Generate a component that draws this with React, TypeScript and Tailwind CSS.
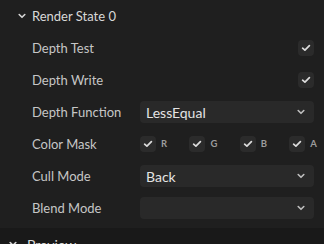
import React from "react";

const Chevron = ({ className = "" }: { className?: string }) => (
  <svg width="8" height="6" viewBox="0 0 8 6" className={className} fill="none">
    <path d="M1.2 1.5 L4 4.3 L6.8 1.5" stroke="currentColor" strokeWidth="1.6" strokeLinecap="round" strokeLinejoin="round" />
  </svg>
);

const Check = () => (
  <div className="w-4 h-4 rounded-[4px] bg-[#2b2b2b] flex items-center justify-center text-[#dcdcdc] shrink-0">
    <svg width="10" height="8" viewBox="0 0 10 8" fill="none">
      <path d="M1.6 4.2 L3.9 6.2 L8.4 1.7" stroke="currentColor" strokeWidth="1.7" strokeLinecap="round" strokeLinejoin="round" />
    </svg>
  </div>
);

const Select = ({ value }: { value?: string }) => (
  <div className="w-[174px] h-[22px] rounded-[4px] bg-[#292929] flex items-center justify-between pl-[6px] pr-[9px] text-[14px] text-[#e4e4e4]">
    <span>{value ?? ""}</span>
    <Chevron className="text-[#c0c0c0]" />
  </div>
);

const Row = ({ label, children }: { label: string; children?: React.ReactNode }) => (
  <div className="h-8 flex items-center">
    <div className="w-[140px] pl-8 pt-px text-[13px] text-[#c6c6c6] shrink-0">{label}</div>
    <div className="flex-1 flex items-center">{children}</div>
  </div>
);

export default function App() {
  return (
    <div className="w-[324px] h-[244px] overflow-hidden bg-[#1f1f1f]" style={{ fontFamily: "Lato, Inter, sans-serif" }}>
      <div className="h-8 flex items-center pl-[18px] text-[13px] text-[#d8d8d8]">
        <Chevron className="text-[#d6d6d6] mr-[6px]" />
        <span className="pt-px">Render State 0</span>
      </div>
      <Row label="Depth Test">
        <div className="ml-auto mr-[10px]"><Check /></div>
      </Row>
      <Row label="Depth Write">
        <div className="ml-auto mr-[10px]"><Check /></div>
      </Row>
      <Row label="Depth Function">
        <Select value="LessEqual" />
      </Row>
      <Row label="Color Mask">
        <div className="w-[177px] flex justify-between">
          {["R", "G", "B", "A"].map((c) => (
            <div key={c} className="flex items-center gap-[5px]">
              <Check />
              <span className="text-[9.5px] font-bold text-[#9c9c9c]">{c}</span>
            </div>
          ))}
        </div>
      </Row>
      <Row label="Cull Mode">
        <Select value="Back" />
      </Row>
      <Row label="Blend Mode">
        <Select />
      </Row>
      <div className="mt-[4px] bg-[#191919] h-8 flex items-center pl-[9px] text-[14px] text-[#dadada]">
        <Chevron className="mr-[10px] text-[#d6d6d6]" />
        <span>Preview</span>
      </div>
    </div>
  );
}
